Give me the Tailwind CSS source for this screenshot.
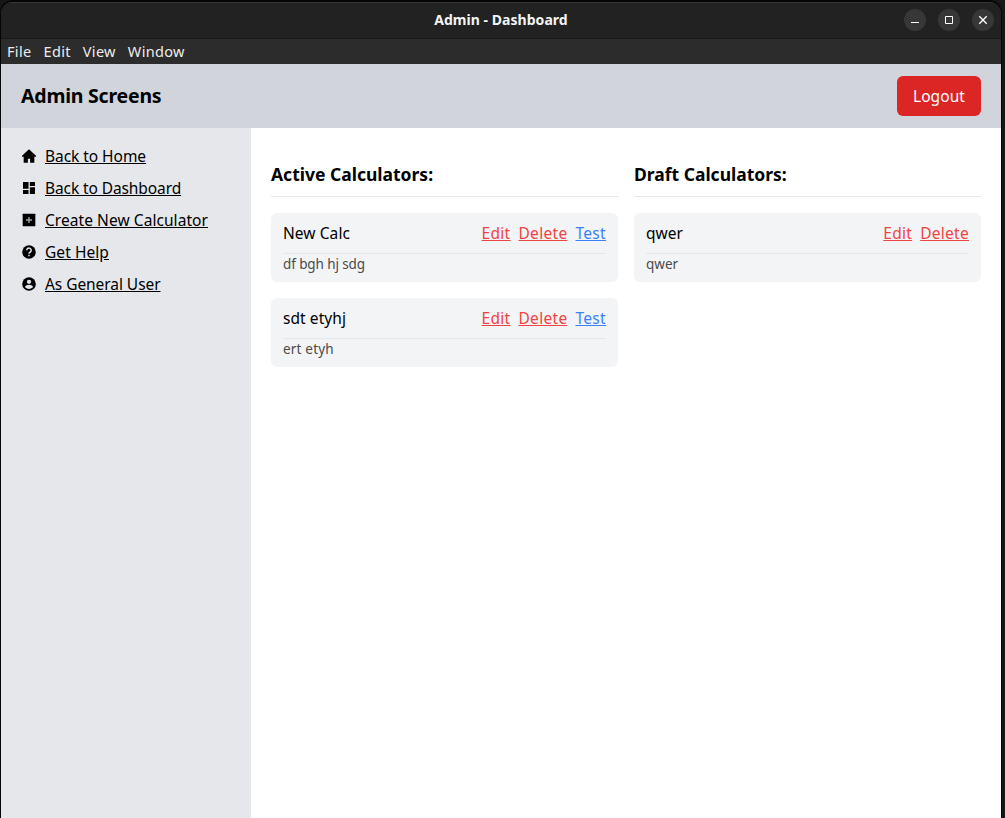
<!DOCTYPE html>
<html lang="en">
<head>
<meta charset="utf-8">
<title>Admin - Dashboard</title>
<script src="https://cdn.jsdelivr.net/npm/@tailwindcss/browser@4"></script>
</head>
<body class="h-[818px] overflow-hidden bg-[#171717] font-['Noto_Sans',sans-serif] text-[15.5px] leading-6 text-black">
<div class="flex h-[818px] w-[1002px] flex-col overflow-hidden rounded-t-[13px] border-x border-t-2 border-[#050505] bg-[#222222]">
  <div class="grid h-[37px] shrink-0 grid-cols-[1fr_auto_1fr] items-center border-t border-b border-t-[#363636] border-b-[#191919] bg-[#222222] pr-[7px] pb-px">
    <span></span>
    <span class="relative left-[3.5px] text-[14px] font-bold tracking-[0.04px] text-[#f4f4f4]">Admin - Dashboard</span>
    <div class="flex justify-end gap-3">
      <svg class="size-[22px]" viewBox="0 0 22 22"><circle cx="11" cy="11" r="11" fill="#373737"/><path d="M7 13.5h8" stroke="#fff"/></svg>
      <svg class="size-[22px]" viewBox="0 0 22 22"><circle cx="11" cy="11" r="11" fill="#373737"/><path d="M7.5 7.5h7v7h-7z" stroke="#fff" fill="none"/></svg>
      <svg class="size-[22px]" viewBox="0 0 22 22"><circle cx="11" cy="11" r="11" fill="#373737"/><path d="M7.3 7.3l7.4 7.4M14.7 7.3l-7.4 7.4" stroke="#fff" stroke-width="1.4"/></svg>
    </div>
  </div>
  <div class="flex h-[25px] shrink-0 items-center gap-3 bg-[#2c2c2c] pb-0.5 pl-1.5 text-[14.5px] tracking-[0.33px] text-[#ececec]">
    <span>File</span><span>Edit</span><span>View</span><span>Window</span>
  </div>
  <header class="flex h-16 shrink-0 items-center justify-between bg-[#d1d5db] px-5">
    <h1 class="text-[19.5px] font-bold tracking-[-0.22px]">Admin Screens</h1>
    <button class="h-10 w-[84px] rounded-md bg-[#dc2626] tracking-[0.07px] text-white">Logout</button>
  </header>
  <div class="flex min-h-0 flex-1">
    <nav class="flex w-[250px] shrink-0 flex-col gap-2 bg-[#e5e7eb] px-5 py-4">
      <div class="flex items-center gap-2"><svg class="size-4" viewBox="0 0 24 24"><path d="M12 2L1.500 11.800V13H4v9h6.300v-6h3.400v6H20v-9h2.500v-1.200z"/></svg><a class="tracking-[-0.05px] underline underline-offset-1">Back to Home</a></div>
      <div class="flex items-center gap-2"><svg class="size-4" viewBox="0 0 24 24"><path d="M3 3h8.300v10H3zM13.300 3H21v6h-7.700zM13.300 11H21v10h-7.700zM3 15h8.300v6H3z"/></svg><a class="tracking-[-0.1px] underline underline-offset-1">Back to Dashboard</a></div>
      <div class="flex items-center gap-2"><svg class="size-4" viewBox="0 0 24 24"><rect x="2.500" y="2.500" width="19" height="19" rx="1"/><path d="M12 7.500v9M7.500 12h9" stroke="#a0a2a5" stroke-width="2"/></svg><a class="tracking-[0.06px] underline underline-offset-1">Create New Calculator</a></div>
      <div class="flex items-center gap-2"><svg class="size-4" viewBox="0 0 24 24"><circle cx="12" cy="12" r="10.200"/><path d="M8.700 9.500a3.300 3.300 0 1 1 5.200 2.600c-1.200.9-1.900 1.300-1.900 2.700" fill="none" stroke="#e5e7eb" stroke-width="2.200"/><path d="M10.900 16.300h2.200v2.200h-2.200z" fill="#e5e7eb"/></svg><a class="tracking-[0.07px] underline underline-offset-1">Get Help</a></div>
      <div class="flex items-center gap-2"><svg class="size-4" viewBox="0 0 24 24"><circle cx="12" cy="12" r="10.200"/><circle cx="12" cy="8.700" r="3.200" fill="#e5e7eb"/><path d="M5.800 16.300c1-2 4-3 6.200-3s5.200 1 6.200 3c-1.400 2-3.600 3.200-6.200 3.200s-4.800-1.200-6.200-3.200z" fill="#e5e7eb"/></svg><a class="tracking-[-0.06px] underline underline-offset-1">As General User</a></div>
    </nav>
    <main class="grid flex-1 grid-cols-2 items-start gap-4 bg-white px-5 pt-8">
      <section>
        <h2 class="mb-4 border-b border-[#e5e7eb] pb-2 text-[17.5px] leading-7 font-bold">Active Calculators:</h2>
        <div class="flex flex-col gap-4">
          <article class="rounded-md bg-[#f3f4f6] px-3 py-2">
            <div class="flex justify-between border-b border-[#e5e7eb] pb-2"><span class="tracking-[0.08px]">New Calc</span>
              <div class="flex gap-2 text-[#ef4444]"><a class="tracking-[0.28px] underline underline-offset-1">Edit</a><a class="tracking-[0.3px] underline underline-offset-1">Delete</a><a class="tracking-[0.32px] text-[#3b82f6] underline underline-offset-1">Test</a></div></div>
            <p class="text-[13.5px] leading-5 tracking-[-0.1px] text-[#4b4b4b]">df bgh hj sdg</p>
          </article>
          <article class="rounded-md bg-[#f3f4f6] px-3 py-2">
            <div class="flex justify-between border-b border-[#e5e7eb] pb-2"><span class="tracking-[0.07px]">sdt etyhj</span>
              <div class="flex gap-2 text-[#ef4444]"><a class="tracking-[0.28px] underline underline-offset-1">Edit</a><a class="tracking-[0.3px] underline underline-offset-1">Delete</a><a class="tracking-[0.32px] text-[#3b82f6] underline underline-offset-1">Test</a></div></div>
            <p class="text-[13.5px] leading-5 tracking-[0.2px] text-[#4b4b4b]">ert etyh</p>
          </article>
        </div>
      </section>
      <section>
        <h2 class="mb-4 border-b border-[#e5e7eb] pb-2 text-[17.5px] leading-7 font-bold">Draft Calculators:</h2>
        <article class="rounded-md bg-[#f3f4f6] px-3 py-2">
          <div class="flex justify-between border-b border-[#e5e7eb] pb-2"><span>qwer</span>
            <div class="flex gap-2 text-[#ef4444]"><a class="tracking-[0.28px] underline underline-offset-1">Edit</a><a class="tracking-[0.28px] underline underline-offset-1">Delete</a></div></div>
          <p class="text-[13.5px] leading-5 text-[#4b4b4b]">qwer</p>
        </article>
      </section>
    </main>
  </div>
</div>
</body>
</html>
